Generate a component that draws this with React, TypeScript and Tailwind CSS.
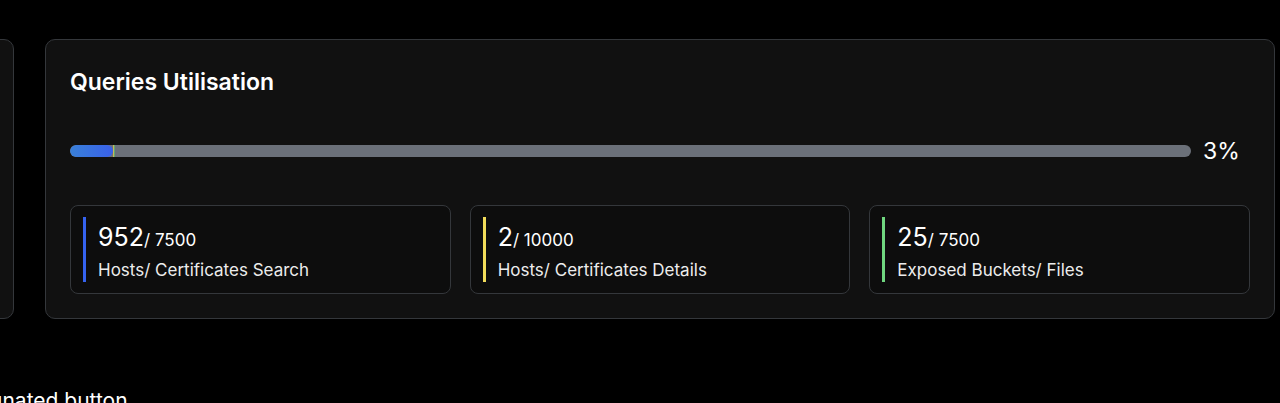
import React, { FC } from 'react';

interface QuotaItem {
  used: number;
  limit: number;
  label: string;
  accent: string; // classe de la barre latérale
}

const quotas: QuotaItem[] = [
  { used: 952, limit: 7500, label: 'Hosts/ Certificates Search', accent: 'bg-[#3563f0]' },
  { used: 2, limit: 10000, label: 'Hosts/ Certificates Details', accent: 'bg-[#f1dc5a]' },
  { used: 25, limit: 7500, label: 'Exposed Buckets/ Files', accent: 'bg-[#6fd67f]' },
];

const total = quotas.reduce((sum, q) => sum + q.limit, 0);
const usedTotal = quotas.reduce((sum, q) => sum + q.used, 0);
const percent = Math.floor((usedTotal / total) * 100);

const QuotaCard: FC<{ item: QuotaItem }> = ({ item }) => (
  <div className="flex h-[89px] rounded-lg border border-[#34373b] bg-[#0d0d0d] px-3 py-[11px]">
    <div className={`w-[3px] shrink-0 ${item.accent}`} />
    <div className="ml-3 flex flex-col pt-[4px]">
      <div className="flex items-baseline text-white">
        <span className="text-[25px] leading-8">{item.used}</span>
        <span className="text-[17px]">/ {item.limit}</span>
      </div>
      <span className="mt-1 text-[17px] leading-6 text-[#ececec]">{item.label}</span>
    </div>
  </div>
);

const App: FC = () => {
  return (
    <div className="h-[403px] w-full overflow-hidden bg-black font-['Inter',sans-serif]">
      <div className="mt-[39px] mr-[5px] flex gap-[31px]">
        {/* Carte précédente, coupée à gauche */}
        <div className="-ml-[286px] h-[280px] w-[300px] shrink-0 rounded-[10px] border border-[#34373b] bg-[#111111]" />

        {/* Queries Utilisation */}
        <div className="h-[280px] flex-1 rounded-[10px] border border-[#34373b] bg-[#111111] px-6 pt-[28px]">
          <h2 className="text-[23px] font-semibold leading-7 text-white">Queries Utilisation</h2>

          <div className="mt-[39px] flex items-center gap-3">
            <div className="flex h-3 flex-1 overflow-hidden rounded-full bg-[#6b7079]">
              <div
                className="h-full rounded-full bg-gradient-to-r from-[#3a80d8] to-[#3a60ea]"
                style={{ width: `${(952 / total) * 100}%` }}
              />
              <div className="h-full w-px bg-[#c9b65a]" />
              <div className="h-full w-px bg-[#5fa872]" />
            </div>
            <span className="w-[47px] text-[23px] leading-8 text-white">{percent}%</span>
          </div>

          <div className="mt-[38px] grid grid-cols-3 gap-[19px]">
            {quotas.map((q, index) => (
              <QuotaCard key={index} item={q} />
            ))}
          </div>
        </div>
      </div>

      <p className="ml-[-54px] mt-[70px] text-[21px] leading-[24px] text-white">Designated button</p>
    </div>
  );
};

export default App;
